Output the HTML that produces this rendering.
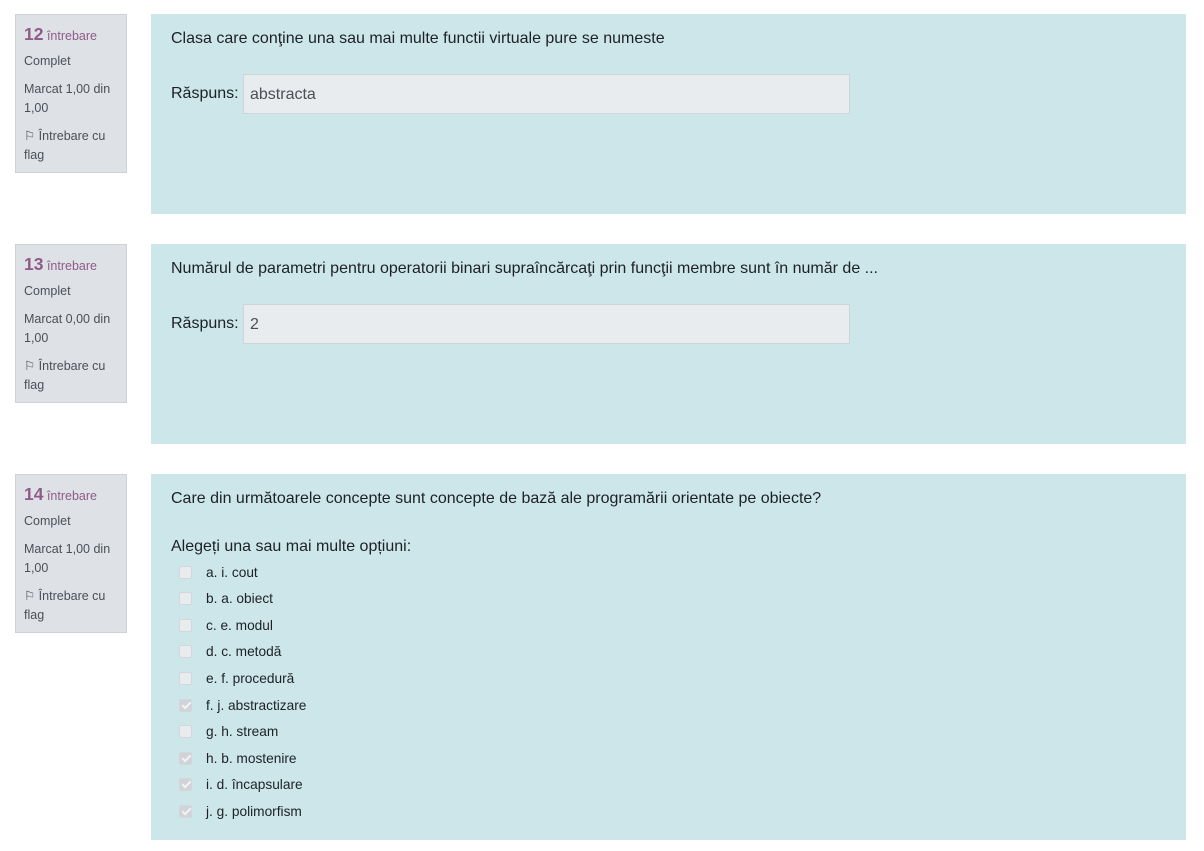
<!DOCTYPE html>
<html><head><meta charset="utf-8"><style>
body{margin:0;background:#fff;font-family:"Liberation Sans",sans-serif;color:#1d2125;position:relative;width:1204px;height:851px;overflow:hidden}
.info{position:absolute;left:15px;width:110px;height:157px;background:#dee2e6;border:1px solid #cdd2d7;font-size:12.5px;color:#495057}
.info .n{position:absolute;left:8px;top:9px;color:#8f5a88;font-size:12.5px}
.info .n b{font-size:17.5px}
.info div{position:absolute;left:8px;line-height:19px}
.c{position:absolute;left:151px;width:1035px;background:#cce6ea}
.q{position:absolute;left:20px;top:16px;font-size:16px;color:#1d2125}
.lab{position:absolute;left:20px;top:71px;font-size:16px}
.inp{position:absolute;left:92px;top:60px;width:607px;height:40px;background:#e9ecef;border:1px solid #ced4da;box-sizing:border-box;font-size:16px;padding:11px 6px 0;color:#495057}
.opt{position:absolute;left:28px;font-size:13.7px}
.cb{position:absolute;left:0;top:1px;width:13px;height:13px;background:#e9ecef;border:1px solid #d3d7da;border-radius:2px;box-sizing:border-box}
.cb.k{background:#d0d4d8}
.cb.k:after{content:"";position:absolute;left:3.5px;top:0px;width:3px;height:7px;border:solid #f2f2f2;border-width:0 2px 2px 0;transform:rotate(45deg)}
.opt span{position:absolute;left:27px;top:0;white-space:nowrap;color:#1d2125}
</style></head><body>

<div class="info" style="top:14px"><span class="n"><b>12</b> întrebare</span><div style="top:37px">Complet</div><div style="top:65px">Marcat 1,00 din<br>1,00</div><div style="top:112px">⚐ Întrebare cu<br>flag</div></div>
<div class="c" style="top:14px;height:200px"><div class="q">Clasa care conţine una sau mai multe functii virtuale pure se numeste</div><div class="lab">Răspuns:</div><div class="inp">abstracta</div></div>

<div class="info" style="top:244px"><span class="n"><b>13</b> întrebare</span><div style="top:37px">Complet</div><div style="top:65px">Marcat 0,00 din<br>1,00</div><div style="top:112px">⚐ Întrebare cu<br>flag</div></div>
<div class="c" style="top:244px;height:200px"><div class="q">Numărul de parametri pentru operatorii binari supraîncărcaţi prin funcţii membre sunt în număr de ...</div><div class="lab">Răspuns:</div><div class="inp">2</div></div>

<div class="info" style="top:474px"><span class="n"><b>14</b> întrebare</span><div style="top:37px">Complet</div><div style="top:65px">Marcat 1,00 din<br>1,00</div><div style="top:112px">⚐ Întrebare cu<br>flag</div></div>
<div class="c" style="top:474px;height:366px"><div class="q">Care din următoarele concepte sunt concepte de bază ale programării orientate pe obiecte?</div>
<div class="q" style="top:64px">Alegeți una sau mai multe opțiuni:</div>
<div class="opt" style="top:91px"><i class="cb"></i><span>a. i. cout</span></div>
<div class="opt" style="top:117px"><i class="cb"></i><span>b. a. obiect</span></div>
<div class="opt" style="top:144px"><i class="cb"></i><span>c. e. modul</span></div>
<div class="opt" style="top:170px"><i class="cb"></i><span>d. c. metodă</span></div>
<div class="opt" style="top:197px"><i class="cb"></i><span>e. f. procedură</span></div>
<div class="opt" style="top:224px"><i class="cb k"></i><span>f. j. abstractizare</span></div>
<div class="opt" style="top:250px"><i class="cb"></i><span>g. h. stream</span></div>
<div class="opt" style="top:277px"><i class="cb k"></i><span>h. b. mostenire</span></div>
<div class="opt" style="top:303px"><i class="cb k"></i><span>i. d. încapsulare</span></div>
<div class="opt" style="top:330px"><i class="cb k"></i><span>j. g. polimorfism</span></div>
</div>
</body></html>
